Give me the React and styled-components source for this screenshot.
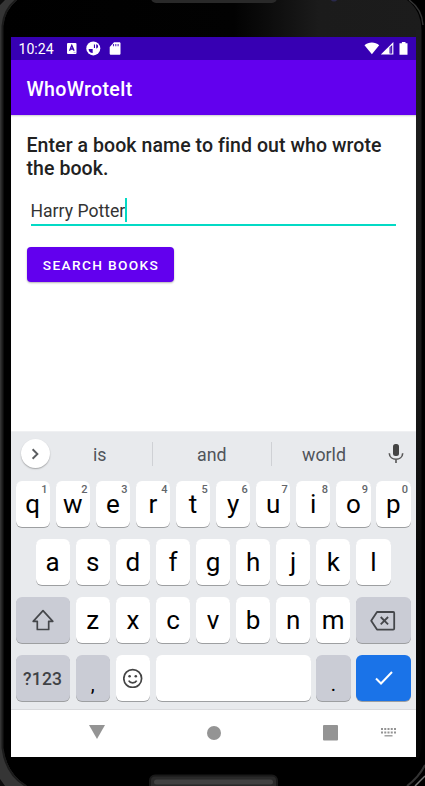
import React from "react";
import styled, { createGlobalStyle } from "styled-components";

const Global = createGlobalStyle`
  * { box-sizing: border-box; }
  body { margin: 0; background: #000; font-family: Roboto, sans-serif; overflow: hidden; }
  svg { display: block; flex: none; }
  button { font-family: inherit; border: 0; padding: 0; margin: 0; }
`;

const Phone = styled.div`
  position: relative;
  width: 425px;
  height: 786px;
  padding: 37px 9px 29px 11px;
  background: #000;
  overflow: hidden;
`;
const BezelArt = styled.svg`
  position: absolute;
  inset: 0;
`;
const Screen = styled.main`
  position: relative;
  width: 405px;
  height: 720px;
  display: flex;
  flex-direction: column;
  background: #fff;
`;
const StatusBar = styled.div`
  height: 23px;
  flex: none;
  display: flex;
  align-items: center;
  justify-content: space-between;
  padding: 0 7px 0 7.5px;
  background: #3700b3;
  color: #fff;
`;
const StatusGroup = styled.div`
  display: flex;
  align-items: center;
`;
const Clock = styled.span`
  width: 47px;
  font-size: 14.1px;
  line-height: 23px;
  padding-top: 1px;
`;
const AppBar = styled.header`
  height: 55px;
  flex: none;
  display: flex;
  align-items: center;
  padding: 3px 15.5px 0;
  background: #6200ee;
  color: #fff;
`;
const Title = styled.h1`
  margin: 0;
  font-size: 19.6px;
  font-weight: 500;
  letter-spacing: 0.3px;
`;
const Content = styled.section`
  height: 316px;
  flex: none;
  padding: 19px 15.5px 0;
  box-shadow: inset 0 2px 2px -1px #ccc;
`;
const Prompt = styled.p`
  margin: 0;
  font-size: 19.5px;
  font-weight: 500;
  letter-spacing: 0.08px;
  line-height: 23px;
  color: #212121;
  white-space: nowrap;
`;
const Field = styled.div`
  display: flex;
  align-items: flex-start;
  height: 29px;
  margin: 17px 4.5px 0 4px;
  border-bottom: 2px solid #03dac5;
  font-size: 17.6px;
  line-height: 28px;
  color: #333;
`;
const Caret = styled.span`
  width: 2px;
  height: 24px;
  margin-top: 1px;
  background: #03dac5;
`;
const SearchButton = styled.button`
  display: block;
  width: 147.5px;
  height: 35px;
  margin-top: 21px;
  padding-left: 1.5px;
  border-radius: 4px;
  background: #6200ee;
  color: #fff;
  font-size: 13.7px;
  font-weight: 500;
  letter-spacing: 1.34px;
  line-height: 36px;
  box-shadow: 0 1px 2px rgba(0, 0, 0, 0.3);
`;
const Keyboard = styled.section`
  height: 279px;
  flex: none;
  background: #e8eaed;
  border-top: 1px solid #eff0f2;
  border-bottom: 1px solid #d9dadd;
`;
const Suggestions = styled.div`
  display: flex;
  align-items: center;
  height: 49px;
  padding: 0 10px 6px 9.5px;
`;
const Expand = styled.button`
  width: 29px;
  height: 29px;
  flex: none;
  border-radius: 50%;
  background: #fff;
  display: flex;
  align-items: center;
  justify-content: center;
  box-shadow: 0 1px 1.5px rgba(0, 0, 0, 0.3);
`;
const Suggestion = styled.div`
  width: ${(p) => p.$width}px;
  height: 24px;
  flex: none;
  padding-right: ${(p) => p.$trim || 0}px;
  border-right: ${(p) => (p.$last ? 0 : "1px solid #cfd1d5")};
  text-align: center;
  font-size: 17.8px;
  line-height: 25px;
  color: #50545a;
`;
const MicSlot = styled.div`
  margin-left: 11px;
`;
const Rows = styled.div`
  display: flex;
  flex-direction: column;
  gap: 12px;
  padding: 0 4.5px;
`;
const Row = styled.div`
  display: flex;
  gap: 5.7px;
  height: 46px;
  padding: 0 ${(p) => (p.$inset ? 20 : 0)}px;
`;
const tones = { light: "#fff", dark: "#caccd5", accent: "#1a73e8" };
const Key = styled.button`
  position: relative;
  width: ${(p) => p.$width || 34.4}px;
  height: 46px;
  flex: none;
  display: flex;
  align-items: center;
  justify-content: center;
  border-radius: 6px;
  background: ${(p) => tones[p.$tone || "light"]};
  color: #000;
  font-size: 26px;
  line-height: 44px;
  padding-bottom: ${(p) => (p.$tone ? 0 : 1)}px;
  box-shadow: 0 1px 0.5px rgba(0, 0, 0, 0.32);
`;
const Hint = styled.span`
  position: absolute;
  top: 3px;
  right: 2.5px;
  color: #62656a;
  font-size: 11px;
  font-weight: 500;
  line-height: 12px;
`;
const SymbolLabel = styled.span`
  color: #3f4246;
  font-size: 17.5px;
  font-weight: 500;
  letter-spacing: 0.2px;
  padding-top: 1px;
`;
const Punctuation = styled.span`
  padding-top: 11px;
  font-size: 20px;
  line-height: 30px;
`;
const NavBar = styled.nav`
  flex: 1;
  display: grid;
  grid-template-columns: 55px 61px 173px 60px 56px;
  align-items: center;
  justify-items: center;
  padding-bottom: 2px;
`;
const NavItem = styled.div`
  grid-column: ${(p) => p.$col};
`;

const AppIcons = () => (
  <svg width="56" height="15" viewBox="0 0 56 15">
    <rect x="1" y="2" width="9.5" height="11" rx="1" fill="#fff" />
    <path d="M3.5 9.7 5.8 4.4l2.3 5.3M4.4 8h2.8" fill="none" stroke="#3700b3" strokeWidth="1.3" />
    <path d="M7.6 11.4h2" stroke="#a58be0" strokeWidth=".8" />
    <circle cx="27.3" cy="7.4" r="7" fill="#fff" />
    <path d="M22.6 7.9h4.1v4.2c-2.4-.2-4-1.8-4.1-4.2Z" fill="#3700b3" />
    <path d="M27.9 3.4h1.1v3.6h-1.1zM30.2 3.2c2.6.4 2.6 3.8 0 4.2Z" fill="#3700b3" />
    <path d="M43.7 6 48 1.2h5.2c.8 0 1.3.5 1.3 1.2v10c0 .8-.5 1.3-1.3 1.3H45c-.8 0-1.3-.5-1.3-1.3Z" fill="#fff" />
    <path d="M47.5 3v2.3M49.8 3v2.3M52.1 3v2.3" stroke="#5427bd" strokeWidth="1.1" />
  </svg>
);
const Signals = () => (
  <svg width="45" height="15" viewBox="0 0 45 15">
    <path d="M.5 4.3C4.5.7 11.2.7 15.2 4.3L7.9 13.2Z" fill="#fff" />
    <path d="M16.8 13.6 29.4 1v12.6Z" fill="#fff" />
    <path d="M25.5 6.6 28.2 3.9v8.6h-2.7Z" fill="#3700b3" />
    <path d="M26.8 6v6.5" stroke="#8b6ad4" strokeWidth=".8" />
    <path d="M37.9 1h3.6v1.3h2v11.5h-8V2.3h2.4Z" fill="#fff" />
  </svg>
);

const Bezel = () => (
  <BezelArt width="425" height="786" viewBox="0 0 425 786">
    <defs>
      <linearGradient id="top" x1="0" x2="1">
        <stop offset="0" stopColor="#000" />
        <stop offset=".55" stopColor="#020202" />
        <stop offset=".75" stopColor="#1b1b1b" />
        <stop offset="1" stopColor="#1c1c1c" />
      </linearGradient>
      <linearGradient id="right" x1="0" y1="0" x2="0" y2="1">
        <stop offset="0" stopColor="#1d1d1d" />
        <stop offset=".45" stopColor="#1b1b1b" />
        <stop offset=".75" stopColor="#070707" />
        <stop offset="1" stopColor="#050505" />
      </linearGradient>
    </defs>
    <rect width="425" height="37" fill="url(#top)" />
    <rect x="416" y="30" width="6" height="728" fill="url(#right)" />
    <path d="M0 0H17Q5 10 3 26V748Q7 774 27 786H0Z" fill="#353535" />
    <path d="M16 0Q4 9 2.5 26V748Q6 775 26 786" fill="none" stroke="#1b1b1b" strokeWidth="2" />
    <path d="M0 0H5L0 5ZM0 779Q3 783 5 786H0Z" fill="#0c0c0c" />
    <path d="M407 0Q421 10 421.5 30V748Q417 774 398 786H425V0Z" fill="#000" />
    <path d="M409 0Q422 9 423 25" fill="none" stroke="#333" strokeWidth="1.5" />
    <path d="M425 765Q419 777 407 786" fill="none" stroke="#333" strokeWidth="2" />
    <path d="M425 776 415 786" stroke="#777" strokeWidth="1.5" />
    <rect x="151" y="-8" width="126" height="11" rx="5" fill="#292929" />
    <circle cx="334" cy="-2" r="3.5" fill="#29294b" />
    <rect x="150" y="775.5" width="127" height="17" rx="5" fill="#292929" stroke="#191919" strokeWidth="2" />
    <rect x="154" y="779.5" width="119" height="5" rx="2.5" fill="#414141" />
  </BezelArt>
);

const Letters = ({ text, hints }) =>
  [...text].map((c, i) => (
    <Key key={c}>
      {c}
      {hints && <Hint>{hints[i]}</Hint>}
    </Key>
  ));

export default function App() {
  return (
    <Phone>
      <Global />
      <Bezel />
      <Screen>
        <StatusBar>
          <StatusGroup>
            <Clock>10:24</Clock>
            <AppIcons />
          </StatusGroup>
          <Signals />
        </StatusBar>
        <AppBar>
          <Title>WhoWroteIt</Title>
        </AppBar>
        <Content>
          <Prompt>
            Enter a book name to find out who wrote
            <br />
            the book.
          </Prompt>
          <Field>
            Harry Potter
            <Caret />
          </Field>
          <SearchButton>SEARCH BOOKS</SearchButton>
        </Content>
        <Keyboard>
          <Suggestions>
            <Expand>
              <svg width="12" height="12" viewBox="0 0 12 12" fill="none" stroke="#5b5d60" strokeWidth="1.9">
                <path d="m3.6 1.3 4.8 4.7-4.8 4.7" />
              </svg>
            </Expand>
            <Suggestion $width={103.5} $trim={2}>is</Suggestion>
            <Suggestion $width={118.5}>and</Suggestion>
            <Suggestion $width={105} $last>world</Suggestion>
            <MicSlot>
              <svg width="16" height="20" viewBox="0 0 16 20">
                <rect x="5" y="0" width="6" height="12" rx="2.5" fill="#444" />
                <path d="M1.3 9.2c.3 8 13.1 8 13.4 0M8 15v4" fill="none" stroke="#555" strokeWidth="1.6" />
              </svg>
            </MicSlot>
          </Suggestions>
          <Rows>
            <Row>
              <Letters text="qwertyuiop" hints="1234567890" />
            </Row>
            <Row $inset>
              <Letters text="asdfghjkl" />
            </Row>
            <Row>
              <Key $tone="dark" $width={54.4}>
                <svg width="22" height="22" viewBox="0 0 22 22" fill="none" stroke="#45474b" strokeWidth="1.7" strokeLinejoin="round">
                  <path d="M11 1.7 1.2 12.3H5.3V20.5h11.4v-8.2h4.1Z" />
                </svg>
              </Key>
              <Letters text="zxcvbnm" />
              <Key $tone="dark" $width={54.7}>
                <svg width="26" height="22" viewBox="0 -2 26 22" fill="none" stroke="#45474b" strokeWidth="1.8" strokeLinejoin="round">
                  <path d="M7 1h16.2q1 0 1 1v15.6q0 1-1 1H7L1.2 9.8Z" />
                  <path d="m10.7 6 7.4 7.4m0-7.4-7.4 7.4" />
                </svg>
              </Key>
            </Row>
            <Row>
              <Key $tone="dark" $width={54.4}>
                <SymbolLabel>?123</SymbolLabel>
              </Key>
              <Key $tone="dark">
                <Punctuation>,</Punctuation>
              </Key>
              <Key>
                <svg width="20" height="20" viewBox="0 0 20 20" fill="none" stroke="#444" strokeWidth="1.7">
                  <circle cx="9.7" cy="10.5" r="8.9" />
                  <path d="M5.7 12.7c1.7 3 6.3 3 8 0" />
                  <circle cx="6.6" cy="8.2" r="1.3" fill="#444" stroke="none" />
                  <circle cx="12.8" cy="8.2" r="1.3" fill="#444" stroke="none" />
                </svg>
              </Key>
              <Key $width={154.9} />
              <Key $tone="dark">
                <Punctuation>.</Punctuation>
              </Key>
              <Key $tone="accent" $width={54.7}>
                <svg width="18" height="14" viewBox="0 0 18 14" fill="none" stroke="#fff" strokeWidth="2">
                  <path d="m1 7.5 5 5L17 1" />
                </svg>
              </Key>
            </Row>
          </Rows>
        </Keyboard>
        <NavBar>
          <NavItem $col={2}>
            <svg width="16" height="15" viewBox="0 0 16 15">
              <path d="M0 0h16L8 14Z" fill="#949494" />
            </svg>
          </NavItem>
          <NavItem $col={3}>
            <svg width="14" height="14" viewBox="0 0 14 14">
              <circle cx="7" cy="7" r="7" fill="#949494" />
            </svg>
          </NavItem>
          <NavItem $col={4}>
            <svg width="15" height="16" viewBox="0 0 15 16">
              <rect width="15" height="15.5" rx="1" fill="#949494" />
            </svg>
          </NavItem>
          <NavItem $col={5}>
            <svg width="15" height="9" viewBox="0 0 15 9" stroke="#949494">
              <path d="M0 1h15M0 4.5h15" strokeWidth="1.8" strokeDasharray="2 1.25" />
              <path d="M3.5 7.8h8" strokeWidth="1.3" />
            </svg>
          </NavItem>
        </NavBar>
      </Screen>
    </Phone>
  );
}
